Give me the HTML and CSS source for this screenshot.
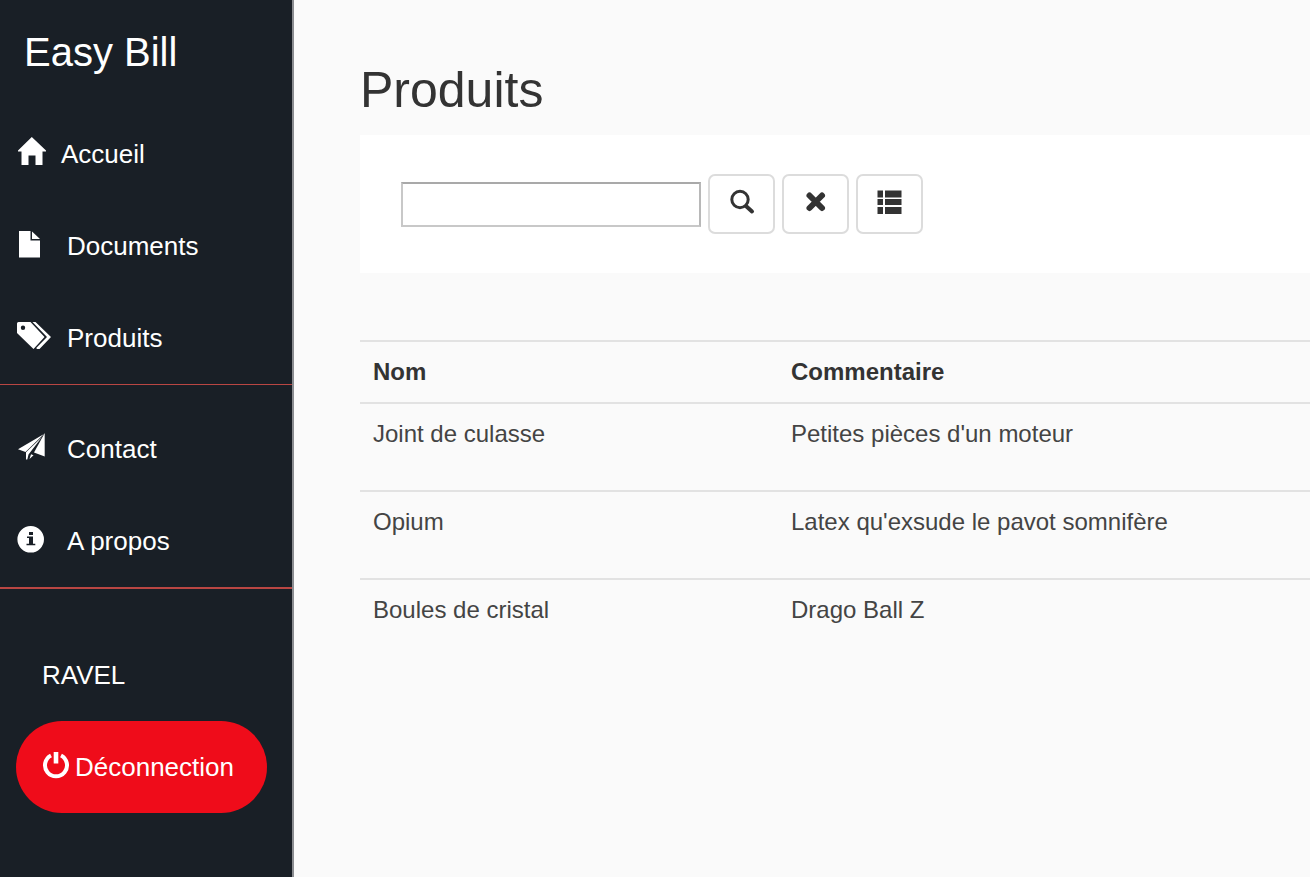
FILE: index.html
```html
<!DOCTYPE html>
<html lang="fr">
<head>
<meta charset="utf-8">
<title>Easy Bill - Produits</title>
<link rel="stylesheet" href="styles.css">
</head>
<body>
<div class="app">
  <aside class="sidebar">
    <a class="brand" href="#">Easy Bill</a>
    <nav class="nav">
      <ul class="nav-group">
        <li><a class="nav-link" href="#"><svg class="icon icon-home" viewBox="0 0 28 34" aria-hidden="true"><path d="M14.800 0 29 13.500v1h-3.500V28h-7v-9.500h-7V28h-7V14.500H1v-1z"/></svg>Accueil</a></li>
        <li><a class="nav-link" href="#"><svg class="icon" viewBox="0 0 34 34" aria-hidden="true"><path d="M2 2h11.500v9.500H23V28.500H2z"/><path d="M15 2.500 23 10h-8z"/></svg>Documents</a></li>
        <li><a class="nav-link" href="#"><svg class="icon" viewBox="0 0 34 34" aria-hidden="true"><path fill-rule="evenodd" d="M1.500 1H13.500L27.500 16 16.500 28 0 12V2.500A1.500 1.500 0 0 1 1.500 1zM6 4.500a2.200 2.200 0 1 0 0 4.400 2.200 2.200 0 0 0 0-4.400z"/><path d="M15.500 1h3L34 16 22.500 28H20l-.8-1L30 16z"/></svg>Produits</a></li>
      </ul>
      <ul class="nav-group">
        <li><a class="nav-link" href="#"><svg class="icon" viewBox="0 0 34 34" aria-hidden="true"><path d="M27 2 8.500 20 1 17.300z"/><path d="M9 20.200 25 5 11.500 22.500 10.300 27.500H9z"/><path d="M27.700 1V24.500L17 20.500z"/><path d="m12.500 27 1.500-4.800 2.500 1z"/></svg>Contact</a></li>
        <li><a class="nav-link" href="#"><svg class="icon" viewBox="0 0 34 34" aria-hidden="true"><path fill-rule="evenodd" d="M13.700 2a13.300 13.300 0 1 0 0 26.600 13.300 13.300 0 0 0 0-26.600zM12 8h4v3h-4zM10 12.500h6v7.300h2.300v1.500H9.500v-1.500H12V14h-2z"/></svg>A propos</a></li>
      </ul>
    </nav>
    <div class="account">
      <p class="user">RAVEL</p>
      <button class="logout" type="button"><svg class="icon icon-power" viewBox="0 0 28 34" aria-hidden="true"><path class="ring" d="M9 5.500a11 11 0 1 0 10 0"/><path d="M11.700 2h4.600v11.500h-4.600z"/></svg>Déconnection</button>
    </div>
  </aside>
  <main class="content">
    <h1 class="title">Produits</h1>
    <form class="toolbar">
      <input class="search" type="text" aria-label="Rechercher un produit">
      <button class="tool" type="button" aria-label="Rechercher"><svg class="tool-icon" viewBox="0 0 28 28" aria-hidden="true"><circle class="lens" cx="12" cy="11.500" r="8.200"/><path class="handle" d="m18.500 18.500 5.500 5"/></svg></button>
      <button class="tool" type="button" aria-label="Effacer"><svg class="tool-icon" viewBox="0 0 28 28" aria-hidden="true"><path class="cross" d="m7.500 7.500 12.500 12.500M20 7.500 7.500 20"/></svg></button>
      <button class="tool" type="button" aria-label="Liste"><svg class="tool-icon" viewBox="0 0 28 28" aria-hidden="true"><path d="M1.500 2.500h5.500v7H1.500zM9 2.500H25.500v7H9zM1.500 11h5.500v6H1.500zM9 11H25.500v6H9zM1.500 19h5.500v7H1.500zM9 19H25.500v7H9z"/></svg></button>
    </form>
    <table class="products">
      <thead>
        <tr><th scope="col">Nom</th><th scope="col">Commentaire</th></tr>
      </thead>
      <tbody>
        <tr><td>Joint de culasse</td><td>Petites pièces d'un moteur</td></tr>
        <tr><td>Opium</td><td>Latex qu'exsude le pavot somnifère</td></tr>
        <tr><td>Boules de cristal</td><td>Drago Ball Z</td></tr>
      </tbody>
    </table>
  </main>
</div>
</body>
</html>
```
FILE: styles.css
```css
* {
  box-sizing: border-box;
}

body {
  margin: 0;
  background: #fafafa;
  color: #333;
  font-family: "Liberation Sans", Arial, sans-serif;
  font-size: 24px;
  line-height: 34px;
}

.app {
  display: flex;
  min-height: 100vh;
}

/* Sidebar */

.sidebar {
  flex: none;
  width: 294px;
  background: #191f26;
  border-right: 2px solid #8b8d91;
  color: #fff;
  font-size: 26px;
}

.brand {
  display: block;
  padding: 28px 24px 32px;
  color: #fff;
  font-size: 40px;
  line-height: 48px;
  text-decoration: none;
}

.nav-group {
  margin: 0 0 18px;
  padding: 0;
  border-bottom: 1px solid #b94643;
  list-style: none;
}

.nav-group:last-child {
  margin-bottom: 0;
  border-bottom-width: 2px;
}

.nav-link {
  display: flex;
  align-items: center;
  gap: 16px;
  height: 92px;
  padding: 0 17px;
  color: #fff;
  text-decoration: none;
}

.icon {
  flex: none;
  width: 34px;
  height: 34px;
  fill: currentColor;
}

.icon-home,
.icon-power {
  width: 28px;
}

.icon-home {
  overflow: visible;
}

.ring {
  fill: none;
  stroke: currentColor;
  stroke-width: 4;
}

.account {
  padding: 68px 16px 32px;
}

.user {
  margin: 0 26px 28px;
  line-height: 36px;
}

.logout {
  display: flex;
  align-items: center;
  gap: 5px;
  height: 92px;
  padding: 0 33px 0 26px;
  border: 0;
  border-radius: 46px;
  background: #ef0c1a;
  color: #fff;
  font: inherit;
}

/* Content */

.content {
  flex: 1;
  min-width: 0;
  padding: 60px 0 40px 66px;
}

.title {
  margin: 0 0 15px;
  font-size: 50px;
  font-weight: 400;
  line-height: 60px;
}

.toolbar {
  display: flex;
  align-items: center;
  gap: 7px;
  margin-bottom: 67px;
  padding: 39px 41px;
  background: #fff;
}

.search {
  width: 300px;
  height: 45px;
  padding: 4px 8px;
  border: 2px solid;
  border-color: #a9a9a9 #b8b8b8 #c8c8c8 #c8c8c8;
  background: #fff;
  color: #333;
  font: inherit;
}

.tool {
  display: flex;
  align-items: center;
  justify-content: center;
  width: 67px;
  height: 60px;
  padding: 0 0 4px;
  border: 2px solid #dcdcdc;
  border-radius: 7px;
  background: #fff;
  color: #333;
}

.tool-icon {
  width: 28px;
  height: 28px;
  fill: currentColor;
}

.lens {
  fill: none;
  stroke: currentColor;
  stroke-width: 3;
}

.handle {
  stroke: currentColor;
  stroke-width: 4;
  stroke-linecap: round;
}

.cross {
  stroke: currentColor;
  stroke-width: 6;
  stroke-linecap: round;
}

.products {
  width: 100%;
  border-collapse: separate;
  border-spacing: 0;
  table-layout: fixed;
}

.products th,
.products td {
  border-top: 2px solid #e2e2e2;
  text-align: left;
  vertical-align: top;
}

.products th {
  padding: 13px;
}

.products th:first-child {
  width: 44%;
}

.products td {
  padding: 13px 13px 39px;
  color: #444;
}
```
